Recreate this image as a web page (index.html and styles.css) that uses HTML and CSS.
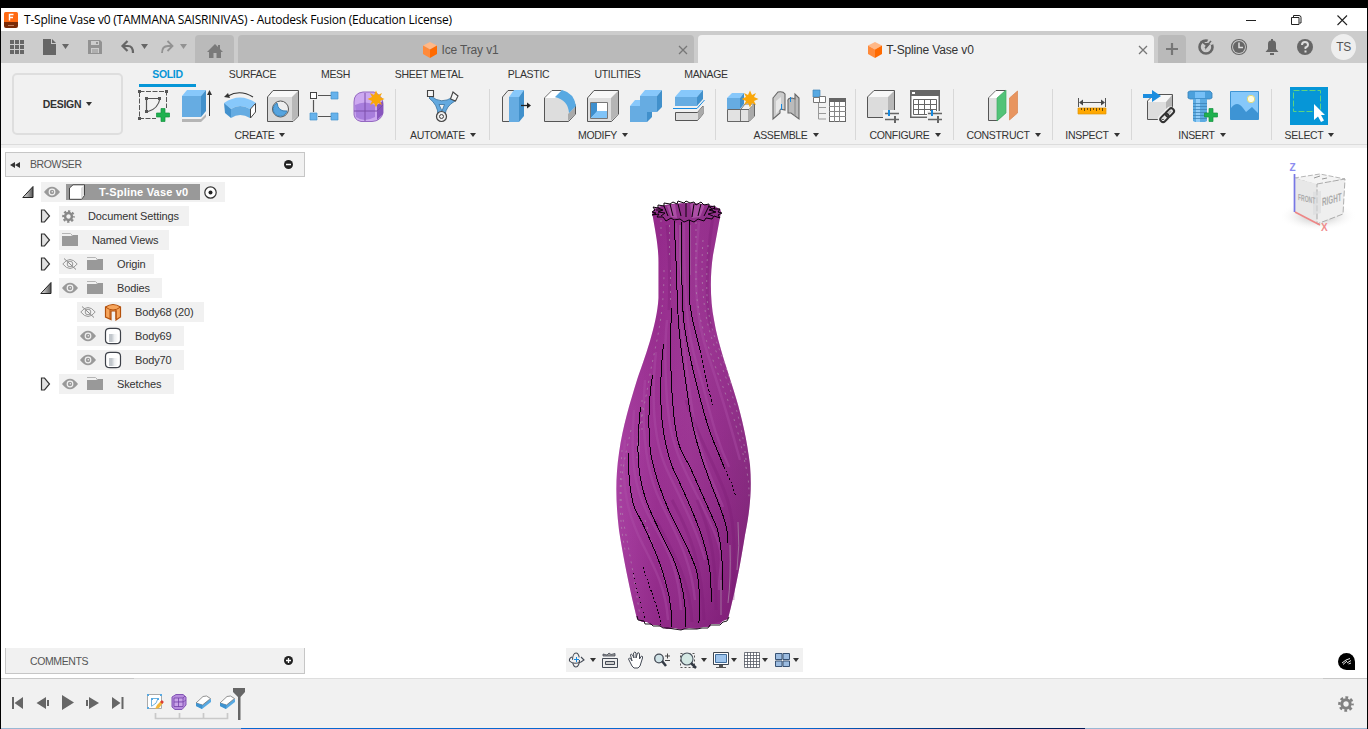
FILE: index.html
```html
<!DOCTYPE html>
<html lang="en">
<head>
<meta charset="utf-8">
<title>T-Spline Vase v0 - Autodesk Fusion</title>
<link rel="stylesheet" href="styles.css">
</head>
<body>
<svg class="defs" width="0" height="0">
  <defs>
    <linearGradient id="gVase" x1="0" x2="1" y1="0" y2="0"><stop offset="0" stop-color="#a53b9f"/><stop offset=".3" stop-color="#95298c"/><stop offset=".55" stop-color="#98308f"/><stop offset=".8" stop-color="#8f2987"/><stop offset="1" stop-color="#852a7e"/></linearGradient>
    <linearGradient id="gShade" x1=".3" x2=".8" y1="0" y2="1"><stop offset="0" stop-color="#8a2a82" stop-opacity=".2"/><stop offset=".4" stop-color="#b858b0" stop-opacity=".2"/><stop offset="1" stop-color="#6d1266" stop-opacity=".4"/></linearGradient>
    <linearGradient id="gCyl"><stop offset="0" stop-color="#c2c7cc"/><stop offset=".3" stop-color="#c2c7cc"/><stop offset=".6" stop-color="#eceef0"/><stop offset="1" stop-color="#fff"/></linearGradient>
    <linearGradient id="gTri"><stop offset="0" stop-color="#eee"/><stop offset="1" stop-color="#555"/></linearGradient>
    <radialGradient id="gShadow"><stop offset="0" stop-color="#aaa"/><stop offset="1" stop-color="#fff" stop-opacity="0"/></radialGradient>
  </defs>
  <symbol id="eye" viewBox="0 0 16 12"><path d="M0 6Q8-4.500 16 6Q8 16.500 0 6Z" fill="#999"/><circle cx="8" cy="6" r="3.400" fill="#f1f1f1"/><circle cx="8" cy="6" r="2.200" fill="#999"/><circle cx="8.300" cy="5.700" r=".8" fill="#eee"/></symbol>
  <symbol id="eyeoff" viewBox="0 0 16 12"><path d="M.8 6Q8-3 15.200 6Q8 15 .8 6Z" fill="none" stroke="#999"/><circle cx="8" cy="6" r="2.800" fill="none" stroke="#999"/><path d="M2 .5L14 11.500" stroke="#888"/></symbol>
  <symbol id="folder" viewBox="0 0 16 14"><path d="M0 .5H8.500L10 2" fill="none" stroke="#b5b5b5"/><path d="M0 3H9L11 2H16V13H0Z" fill="#999"/></symbol>
  <symbol id="closed" viewBox="0 0 12 16"><path d="M1.500 2H4.500L9.500 8L4.500 14H1.500Z" fill="#e2e2e2" stroke="#333" stroke-width="1.200"/></symbol>
  <symbol id="open" viewBox="0 0 12 16"><path d="M11 2.500V13.500H.8Z" fill="url(#gTri)" stroke="#222"/></symbol>
  <symbol id="cyl" viewBox="0 0 18 18"><path d="M1.500 5Q1.500 1.300 6 1.300H12Q16.500 1.300 16.500 5V13Q16.500 16.700 12 16.700H6Q1.500 16.700 1.500 13Z" fill="#fff" stroke="#3d4149" stroke-width="1.200"/><rect x="5" y="7" width="9" height="8" fill="url(#gCyl)"/></symbol>
  <symbol id="gear" viewBox="0 0 16 16"><circle cx="8" cy="8" r="4.200" fill="none" stroke="currentColor" stroke-width="3"/><circle cx="8" cy="8" r="6.500" fill="none" stroke="currentColor" stroke-width="2.600" stroke-dasharray="2.800 2.305" stroke-dashoffset="1.400"/></symbol>
  <symbol id="cube" viewBox="0 0 16 16"><path d="M8 0L15 3.500L8 7.500L1 3.500Z" fill="#ffb887"/><path d="M1 3.500L8 7.500V16L1 12Z" fill="#ff8a3a"/><path d="M15 3.500L8 7.500V16L15 12Z" fill="#ff6a00"/></symbol>
  <symbol id="sun" viewBox="0 0 18 18"><path d="M9 .5L11 5L15 3L13 7L17.500 9L13 11L15 15L11 13L9 17.500L7 13L3 15L5 11L.5 9L5 7L3 3L7 5Z" fill="#f9a70a"/></symbol>
  <symbol id="plus" viewBox="0 0 14 14"><path d="M5 .5H9V5H13.500V9H9V13.500H5V9H.5V5H5Z" fill="#1fb14f" stroke="#169441" stroke-width=".7"/></symbol>
  <symbol id="fillet" viewBox="0 0 16 16"><path d="M1 9V12L7 15L16 8V5Z" fill="#58a9e2"/><path d="M1 9L8 2.500L11.500 2L15.500 4.500L7.500 11Z" fill="#fff" stroke="#777" stroke-width=".8"/><path d="M1 9L7.500 11L7 15L1 12Z" fill="#3e93d0"/></symbol>
</svg>

<div class="window">
  <header class="titlebar">
    <svg class="app-logo" width="14" height="16" viewBox="0 0 14 16"><rect width="14" height="13" rx="1.500" fill="#ff6a13"/><path d="M0 10H14V14Q14 16 12 16H2Q0 16 0 14Z" fill="#7a2b08"/><path d="M5.500 8.500V2.500H9.500M5.500 5.500H9" fill="none" stroke="#fff" stroke-width="1.400"/><path d="M4 13.500H10" stroke="#c07a58"/></svg>
    <span class="title">T-Spline Vase v0 (TAMMANA SAISRINIVAS) - Autodesk Fusion (Education License)</span>
    <svg class="win-buttons" width="102" height="12" viewBox="1246 12 102 12"><path d="M1246 18.500H1256M1337.500 13.500L1347 23M1347 13.500L1337.500 23" fill="none" stroke="#222" stroke-width="1.100"/><path d="M1291.500 15.500H1299V22.500H1291.500ZM1293.500 15V13.500H1299Q1301 13.500 1301 15.500V21H1299.500" fill="none" stroke="#222"/></svg>
  </header>

  <nav class="tabbar">
    <svg class="quick" width="194" height="32" viewBox="1 31 194 32">
      <path d="M10 40h4v4h-4zM15 40h4v4h-4zM20 40h4v4h-4zM10 45h4v4h-4zM15 45h4v4h-4zM20 45h4v4h-4zM10 50h4v4h-4zM15 50h4v4h-4zM20 50h4v4h-4z" fill="#666"/>
      <path d="M43 39H51V44H56V55H43Z M52 39L56 43H52Z" fill="#666"/>
      <path d="M62 44H69L65.500 49ZM141 44H148L144.500 49Z" fill="#666"/><path d="M180 44H187L183.500 49Z" fill="#929292"/>
      <path d="M88 40H100L102 42V54H88Z" fill="#929292"/><path d="M91 41H99V45H91ZM91 48H99V53H91Z" fill="#ccc"/><path d="M92 50H98M92 52H98" stroke="#929292"/><path d="M96 42H98V44H96Z" fill="#929292"/>
      <path d="M127.500 41L122.500 46L127.500 51M122.500 46H128Q133 46 133 53" fill="none" stroke="#666" stroke-width="2.200"/>
      <path d="M167.500 41L172.500 46L167.500 51M172.500 46H168Q162 46 162 53" fill="none" stroke="#929292" stroke-width="1.800"/>
    </svg>
    <div class="tab home"><svg width="16" height="14" viewBox="0 0 16 14"><path d="M8 0L11 3V1H13V5L16 8H14V14H9.500V9H6.500V14H2V8H0Z" fill="#7a7a7a"/></svg></div>
    <div class="tab doc"><svg class="doc-cube" width="16" height="16"><use href="#cube"/></svg><span class="doc-name">Ice Tray v1</span><svg class="close" width="10" height="10" viewBox="0 0 10 10"><path d="M1 1L9 9M9 1L1 9" stroke="#777" stroke-width="1.300"/></svg></div>
    <div class="tab doc active"><svg class="doc-cube" width="16" height="16"><use href="#cube"/></svg><span class="doc-name">T-Spline Vase v0</span><svg class="close" width="10" height="10" viewBox="0 0 10 10"><path d="M1 1L9 9M9 1L1 9" stroke="#777" stroke-width="1.300"/></svg></div>
    <div class="tab add"><svg width="14" height="14" viewBox="0 0 14 14"><path d="M7 1V13M1 7H13" stroke="#777" stroke-width="2.200"/></svg></div>
    <svg class="status" width="125" height="32" viewBox="1190 31 125 32">
      <circle cx="1206" cy="47" r="6.500" fill="none" stroke="#666" stroke-width="2.600"/><path d="M1200 41L1208 40L1204 43L1211 43L1205 50L1206 46Z" fill="#666"/><path d="M1209 38L1214 44L1211 45L1207 42Z" fill="#ccc"/><path d="M1205 48L1211 41" stroke="#666" stroke-width="1.500"/>
      <circle cx="1239" cy="47" r="7.500" fill="none" stroke="#666" stroke-width="1.200"/><circle cx="1239" cy="47" r="6" fill="#666"/><path d="M1239 42.500V47.500H1243" fill="none" stroke="#ddd" stroke-width="1.500"/>
      <path d="M1265.500 52H1278.500L1276 49V44Q1276 40.500 1273 40.500V39H1271V40.500Q1268 40.500 1268 44V49ZM1270 53H1274V55H1270Z" fill="#666"/>
      <circle cx="1305" cy="47" r="8" fill="#666"/><path d="M1302 45Q1302 42 1305 42T1308 45Q1308 46.500 1305.500 47.500V49M1305.500 50.500V52.500" fill="none" stroke="#ddd" stroke-width="2"/>
    </svg>
    <div class="avatar">TS</div>
  </nav>

  <section class="ribbon">
    <div class="design">DESIGN<i class="caret"></i></div>
    <div class="ribbon-main">
      <div class="modes"><span class="mode m57 on">SOLID</span><span class="mode m113">SURFACE</span><span class="mode m53">MESH</span><span class="mode m134">SHEET METAL</span><span class="mode m65">PLASTIC</span><span class="mode m113">UTILITIES</span><span class="mode m64">MANAGE</span></div>
      <div class="groups">
        <div class="group create">
          <div class="tools">
            <svg viewBox="132 86 43 40"><path d="M139.500 92V118.500H156M139.500 91.500H166.500V108" fill="none" stroke="#555" stroke-dasharray="5 1.500"/><path d="M146.500 111V98.500H160Q158 109 148 111.500" fill="none" stroke="#555" stroke-width="1.200"/><path d="M138 90h3v3h-3zM165 90h3v3h-3zM138 117h3v3h-3zM145 97h3v3h-3zM158 97h3v3h-3zM145 110h3v3h-3z" fill="#555"/><svg x="156" y="108" width="14" height="14"><use href="#plus"/></svg></svg>
            <svg viewBox="175 86 43 40"><path d="M182 119L201 119L206 114V117L201 122H182Z" fill="#b5b5b5"/><path d="M182 96L187 90H206L201 96Z" fill="#87c8fb"/><path d="M182 96H201V117H182Z" fill="#66ace2"/><path d="M201 96L206 90V111L201 117Z" fill="#4190cb"/><path d="M209.500 116V94" stroke="#333"/><path d="M207 95L209.500 90L212 95Z" fill="#333"/></svg>
            <svg viewBox="218 86 43 40"><path d="M228 96Q240 89 253 97" fill="none" stroke="#333" stroke-width="1.200"/><path d="M224 97L228 93L230 98Z" fill="#333"/><path d="M224 103Q240 92 256 103L250 109Q240 103 231 109Z" fill="#87c8fb"/><path d="M224 103L231 109V118L225 113Z" fill="#4391cd"/><path d="M231 109Q240 103 250 109V118Q240 112 231 118Z" fill="#66ace2"/><path d="M250.500 109L255.500 103.500V112L250.500 118Z" fill="#fff" stroke="#444"/></svg>
            <svg viewBox="261 86 43 40"><path d="M267.500 97L273 90.500H298.500V116L293 121.500H267.500Z" fill="#f8f8f8" stroke="#555"/><path d="M268 97H292V121H268Z" fill="#d9d9d9"/><path d="M292 97L298 91V116L292 121Z" fill="#b8b8b8"/><circle cx="280.500" cy="109" r="8" fill="#eee" stroke="#555"/><path d="M277 103A7 7 0 1 0 287 111Q278 112 277 103Z" fill="#55a4df" stroke="#3880b5"/></svg>
            <svg viewBox="304 86 43 40"><path d="M318 95.500H331M313.500 100V112M318 116.500H331" stroke="#555" stroke-width="1.200"/><rect x="310.500" y="92.500" width="6" height="6" fill="#fff" stroke="#444"/><path d="M331 92h7v7h-7zM310 113h7v7h-7zM331 113h7v7h-7z" fill="#66b2ec" stroke="#4592cb" stroke-width=".7"/></svg>
            <svg viewBox="347 86 43 40"><path d="M354 102Q354 93 363 92H374Q383 96 383 104V113Q381 121 372 121.500H361Q353 120 354 111Z" fill="#cda9f0" stroke="#9468c1"/><path d="M355 105Q365 100 375 105V117Q364 123 356 117Z" fill="#a87edd"/><path d="M377 105L383 101V114L377 120Z" fill="#8755bd"/><path d="M365 93V121M354 111H377L383 105" stroke="#7c4eaa" fill="none"/><use href="#sun" x="367" y="90" width="18" height="18"/></svg>
          </div>
          <div class="label">CREATE<i class="caret"></i></div>
        </div>
        <div class="group automate">
          <div class="tools"><svg viewBox="420 86 43 40"><path d="M431 96Q441 105 453 97L455 101Q446 106 445 115H438Q438 105 429 98Z" fill="#63a9df" stroke="#356e9c" stroke-width=".8"/><path d="M439 104.500L444.500 104.500L442 111Z" fill="#f1f1f1" stroke="#356e9c" stroke-width=".8"/><circle cx="441.500" cy="116.500" r="5" fill="#eee" stroke="#444" stroke-width="1.200"/><circle cx="441.500" cy="116.500" r="2" fill="#eee" stroke="#444"/><path d="M427.500 90.500H433.500V96.500H427.500Z M453 92L458 96L455.500 101L450.500 99Z" fill="#f5f5f5" stroke="#444" stroke-width="1.100"/></svg></div>
          <div class="label">AUTOMATE<i class="caret"></i></div>
        </div>
        <div class="group modify">
          <div class="tools">
            <svg viewBox="495 86 43 40"><path d="M502.500 97L508 90.500H515V121.500H502.500Z" fill="#ececec" stroke="#555"/><path d="M509 97L514 90H524L519 97Z" fill="#87c8fb"/><path d="M509 97H519V122H509Z" fill="#66ace2"/><path d="M519 97L524 90V116L519 122Z" fill="#4190cb"/><path d="M521 105.500H528" stroke="#222" stroke-width="1.300"/><path d="M527 102.500L531 105.500L527 108.500Z" fill="#222"/></svg>
            <svg viewBox="538 86 43 40"><path d="M544.500 98L552 90.500H560Q572 93 575.500 106V114L568.500 121.500H544.500Z" fill="#ddd" stroke="#555"/><path d="M545 98L552 91H562L555 98Z" fill="#fff"/><path d="M568 114L575 107V114L568 121Z" fill="#aaa"/><path d="M555 97L562 90Q574 93 576 106L569 113Q568 100 555 97Z" fill="#58a9e2"/></svg>
            <svg viewBox="581 86 43 40"><path d="M587.500 98L594 90.500H618.500V114L611.500 121.500H587.500Z" fill="#f7f7f7" stroke="#555"/><path d="M588 98H611V121H588Z" fill="#dedede"/><path d="M611 98L618 91V114L611 121Z" fill="#b5b5b5"/><path d="M590.500 102.500H607.500V118.500H590.500Z" fill="#fff" stroke="#777"/><path d="M591 103L597 103V112L591 118Z" fill="#3d8fce"/><path d="M591 118L597 111H607V118Z" fill="#80c4f8"/></svg>
            <svg viewBox="624 86 43 40"><path d="M640 96L645 90H662L657 96ZM630 106L635 100H640V106Z" fill="#87c8fb"/><path d="M640 96H657V112H647V122H630V106H640Z" fill="#66ace2"/><path d="M657 96L662 90V107L657 112H652V117L647 122V112H657Z" fill="#4190cb"/></svg>
            <svg viewBox="667 86 43 40"><path d="M675 97L681 90H703L697 97Z" fill="#87c8fb"/><path d="M675 97H697V106H675Z" fill="#66ace2"/><path d="M697 97L703 90V99L697 106Z" fill="#4190cb"/><path d="M673 108.500H697L704.500 100" fill="none" stroke="#1689df"/><path d="M675.500 112.500H697.500L703 106V114L697.500 120.500H675.500Z" fill="#ddd" stroke="#555"/><path d="M698 112L703 106V114L698 120Z" fill="#aaa"/></svg>
          </div>
          <div class="label">MODIFY<i class="caret"></i></div>
        </div>
        <div class="group assemble">
          <div class="tools">
            <svg viewBox="722 86 43 40"><path d="M727.500 109.500H749L754.500 104V116L749 121.500H727.500Z" fill="#e2e2e2" stroke="#666"/><path d="M740.500 110V121M749 110V121M741 109L745 104H754" stroke="#777" fill="none"/><path d="M749.500 110L754 105V116L749.500 121Z" fill="#aaa"/><path d="M727 98L732 93H744L740 98Z" fill="#87c8fb"/><path d="M727 98H740V109H727Z" fill="#66ace2"/><path d="M740 98L744 93V104L740 109Z" fill="#4190cb"/><use href="#sun" x="741" y="90" width="18" height="18"/></svg>
            <svg viewBox="765 86 43 40"><path d="M773 98L778 92Q783 91 785 94V110L780 109V113L773 119Z" fill="#ccc" stroke="#666" stroke-width="1.100"/><path d="M776 101L781 97V108L776 114Z" fill="#e8e8e8"/><path d="M788 102Q787 98 792 98L795 99V94L799 98V119L791 113H788Z" fill="#bbb" stroke="#666" stroke-width="1.100"/><path d="M795 97V116" stroke="#888"/><path d="M781.500 104V110M790.500 97V102" stroke="#1689df"/></svg>
            <svg viewBox="808 86 43 40"><path d="M813 90H820V97H813Z" fill="#58a9e2" stroke="#4085b8" stroke-width=".7"/><path d="M813.500 97.500H819.500V102.500H813.500ZM819.500 96.500H825.500V102.500H819.500Z" fill="#fff" stroke="#777"/><path d="M818.500 103V119H826M818.500 107.500H826M818.500 113.500H826" fill="none" stroke="#999"/><path d="M829 98H846V122H829Z" fill="#666"/><path d="M830 102H845V121H830Z" fill="#fff"/><path d="M829 106.500H846M829 111.500H846M829 116.500H846M834.500 102V122M839.500 102V122" stroke="#888"/></svg>
          </div>
          <div class="label">ASSEMBLE<i class="caret"></i></div>
        </div>
        <div class="group configure">
          <div class="tools">
            <svg viewBox="861 86 43 40"><path d="M867.500 97L874 90.500H894.500V111L888 117.500H867.500Z" fill="#f8f8f8" stroke="#555"/><path d="M868 97H888V117H868Z" fill="#dcdcdc"/><path d="M888 97L894 91V111L888 117Z" fill="#b8b8b8"/><path d="M883 110H901V124H883Z" fill="#f1f1f1"/><path d="M885 113.500H899M885 119.500H899" stroke="#666" stroke-width="1.500"/><path d="M888 110h2v6h-2z" fill="#1689df"/><path d="M894 116h2v7h-2z" fill="#666"/></svg>
            <svg viewBox="904 86 43 40"><path d="M910 90H940V118H910Z" fill="#666"/><path d="M911.500 96H938.500V116.500H911.500Z" fill="#fff"/><path d="M913.500 99.500H936.500V114.500H913.500ZM913 104.500H937M913 109.500H937M918.500 99V115M924.500 99V115M930.500 99V115" fill="none" stroke="#666"/><path d="M912 92h3v2h-3z" fill="#fff"/><path d="M927 111H943V124H927Z" fill="#f1f1f1"/><path d="M928 113.500H942M928 119.500H942" stroke="#666" stroke-width="1.500"/><path d="M931 110h2v6h-2z" fill="#1689df"/><path d="M937 116h2v7h-2z" fill="#666"/></svg>
          </div>
          <div class="label">CONFIGURE<i class="caret"></i></div>
        </div>
        <div class="group construct">
          <div class="tools"><svg viewBox="982 86 43 40"><path d="M988.500 98L996 90.500H1005V113L997 120.500H988.500Z" fill="#e0e0e0" stroke="#555"/><path d="M989 98L996 91H1005L997 98Z" fill="#fff"/><path d="M997 98L1006 90V113L997 121Z" fill="#52c378" stroke="#42aa65" stroke-width=".7"/><path d="M1009.500 98L1017.500 91V113L1009.500 120Z" fill="#e8955f" stroke="#d98450" stroke-width=".7"/></svg></div>
          <div class="label">CONSTRUCT<i class="caret"></i></div>
        </div>
        <div class="group inspect">
          <div class="tools"><svg viewBox="1071 86 43 40"><path d="M1078.500 98V107M1105.500 98V107M1081 102.500H1103" stroke="#555" fill="none"/><path d="M1079 102.500L1083 99.500V105.500ZM1105 102.500L1101 99.500V105.500Z" fill="#444"/><path d="M1078 108H1106V114H1078Z" fill="#ffa800" stroke="#e09608" stroke-width=".7"/><path d="M1081.500 108V110M1084.500 108V111M1087.500 108V110M1090.500 108V111M1093.500 108V110M1096.500 108V111M1099.500 108V110M1102.500 108V111" stroke="#6d4b0a"/></svg></div>
          <div class="label">INSPECT<i class="caret"></i></div>
        </div>
        <div class="group insert">
          <div class="tools">
            <svg viewBox="1137 86 43 40"><path d="M1147.500 101L1154 94.500H1172.500V113L1166 119.500H1147.500Z" fill="#f7f7f7" stroke="#555"/><path d="M1148 102H1166V119H1148Z" fill="#ddd"/><path d="M1166 102L1172 95V113L1166 119Z" fill="#b5b5b5"/><path d="M1143 94H1152V90L1161 96L1152 102V98H1143Z" fill="#1b8ddf"/><g transform="rotate(-45 1167 115)" fill="none" stroke="#f1f1f1" stroke-width="4"><rect x="1158" y="112" width="9" height="6" rx="3"/><rect x="1166" y="112" width="9" height="6" rx="3"/></g><g transform="rotate(-45 1167 115)" fill="none" stroke="#333" stroke-width="2"><rect x="1158.500" y="112.500" width="9.500" height="5.500" rx="2.700"/><rect x="1166" y="112.500" width="9.500" height="5.500" rx="2.700"/></g></svg>
            <svg viewBox="1180 86 43 40"><path d="M1188 92L1190 91H1210L1212 93V98L1210 99H1190L1188 98Z" fill="#4ba0dc" stroke="#3581b8" stroke-width=".8"/><path d="M1195 92H1205V98H1195Z" fill="#76c0f7"/><path d="M1193 99H1207V121L1205 122H1195L1193 121Z" fill="#5cabe2"/><path d="M1196 99H1200V122H1196Z" fill="#90ccf8"/><path d="M1193 103.500H1207M1193 106.500H1207M1193 109.500H1207M1193 112.500H1207M1193 115.500H1207M1193 118.500H1207" stroke="#3d83b6" stroke-width=".8"/><svg x="1204" y="108" width="14" height="14"><use href="#plus"/></svg></svg>
            <svg viewBox="1223 86 43 40"><path d="M1230.500 91.500H1258.500V119.500H1230.500Z" fill="#86c8fa" stroke="#3e94d4"/><path d="M1231 108Q1237 100 1243 108L1246 112L1252 107L1258 113V119H1231Z" fill="#3e94d4"/><circle cx="1251" cy="99" r="3.700" fill="#fffce0" stroke="#e2d978"/></svg>
          </div>
          <div class="label">INSERT<i class="caret"></i></div>
        </div>
        <div class="group select">
          <div class="tools"><svg viewBox="1287 86 43 40"><path d="M1290 87H1328V125H1290Z" fill="#0696d7"/><path d="M1293.500 90.500H1320.500V111.500H1293.500Z" fill="none" stroke="#5ed37f" stroke-dasharray="6 2"/><path d="M1314 104V120L1318 116.500L1321 122L1324 120.500L1321 115H1325Z" fill="#fff"/></svg></div>
          <div class="label">SELECT<i class="caret"></i></div>
        </div>
      </div>
    </div>
  </section>

  <main class="canvas">
    <aside class="left">
      <div class="browser">
        <div class="panel"><svg width="10" height="6" viewBox="0 0 10 6"><path d="M5 0V6L0 3ZM10 0V6L5 3Z" fill="#333"/></svg><span class="panel-name">BROWSER</span><svg width="9" height="9" viewBox="0 0 9 9"><circle cx="4.500" cy="4.500" r="4.500" fill="#222"/><path d="M2 4.500H7" stroke="#fff" stroke-width="1.500"/></svg></div>
        <div class="tree">
          <div class="row l0"><svg class="arrow" width="12" height="16"><use href="#open"/></svg><div class="item w184"><svg width="16" height="12"><use href="#eye"/></svg><div class="root"><svg width="18" height="16" viewBox="0 0 18 16"><path d="M1.500 4L5 .8H16.500V11.500L13.500 15.300H1.500Z" fill="#fff" stroke="#444"/><path d="M13 4L16 1.500V11L13 15Z" fill="#ddd"/></svg><b>T-Spline Vase v0</b></div><svg width="13" height="13" viewBox="0 0 13 13"><circle cx="6.500" cy="6.500" r="5.700" fill="#fff" stroke="#333" stroke-width="1.200"/><circle cx="6.500" cy="6.500" r="2" fill="#222"/></svg></div></div>
          <div class="row l1"><svg class="arrow" width="12" height="16"><use href="#closed"/></svg><div class="item w130"><svg class="gear-small" width="13" height="13"><use href="#gear"/></svg><span class="t13">Document Settings</span></div></div>
          <div class="row l1"><svg class="arrow" width="12" height="16"><use href="#closed"/></svg><div class="item w110"><svg width="16" height="14"><use href="#folder"/></svg><span class="t14">Named Views</span></div></div>
          <div class="row l1"><svg class="arrow" width="12" height="16"><use href="#closed"/></svg><div class="item w95"><svg width="16" height="12"><use href="#eyeoff"/></svg><svg class="second" width="16" height="14"><use href="#folder"/></svg><span class="t14">Origin</span></div></div>
          <div class="row l1"><svg class="arrow" width="12" height="16"><use href="#open"/></svg><div class="item w103"><svg width="16" height="12"><use href="#eye"/></svg><svg class="second" width="16" height="14"><use href="#folder"/></svg><span class="t14">Bodies</span></div></div>
          <div class="row l2"><div class="item w127"><svg width="16" height="12"><use href="#eyeoff"/></svg><svg class="second body" width="18" height="18" viewBox="0 0 18 18"><path d="M1.500 4Q9-1 16.500 4V14L12 17V8H7V16.500L1.500 14Z" fill="#f6a55c" stroke="#b4510c" stroke-width="1.200"/><path d="M1.500 4Q9 10 16.500 4M6 7V16M12 7V16" fill="none" stroke="#b4510c"/></svg><span class="t13">Body68 (20)</span></div></div>
          <div class="row l2"><div class="item w107"><svg width="16" height="12"><use href="#eye"/></svg><svg class="second body" width="18" height="18"><use href="#cyl"/></svg><span class="t13">Body69</span></div></div>
          <div class="row l2"><div class="item w107"><svg width="16" height="12"><use href="#eye"/></svg><svg class="second body" width="18" height="18"><use href="#cyl"/></svg><span class="t13">Body70</span></div></div>
          <div class="row l1"><svg class="arrow" width="12" height="16"><use href="#closed"/></svg><div class="item w115"><svg width="16" height="12"><use href="#eye"/></svg><svg class="second" width="16" height="14"><use href="#folder"/></svg><span class="t14">Sketches</span></div></div>
        </div>
      </div>
      <div class="panel comments"><span class="panel-name">COMMENTS</span><svg width="9" height="9" viewBox="0 0 9 9"><circle cx="4.500" cy="4.500" r="4.500" fill="#222"/><path d="M2 4.500H7M4.500 2V7" stroke="#fff" stroke-width="1.300"/></svg></div>
    </aside>

    <div class="center">
      <svg class="vase" width="144" height="440" viewBox="612 195 144 440">
        <path d="M652 212C655 230 658.500 245 658.500 262V298C657 325 644 360 637 380C630 403 623 425 619 453C615 480 616 505 619 530C622 550 627 575 632 598L637 619L642 622L647 622L651 625L658 625L662 627L667 629L675 628L681 630L689 628L697 629L703 627L710 627L711 624L720 624L723 621L728 619C736 588 741 560 745 535C750 510 752 490 750 465C747 440 742 418 736 398C729 374 718 345 714 320C710 300 710 275 713 255L721 212Z" fill="url(#gVase)"/>
        <path d="M652 212C655 230 658.500 245 658.500 262V298C657 325 644 360 637 380C630 403 623 425 619 453C615 480 616 505 619 530C622 550 627 575 632 598L637 619L667 629L703 627L728 619C736 588 741 560 745 535C750 510 752 490 750 465C747 440 742 418 736 398C729 374 718 345 714 320C710 300 710 275 713 255L721 212Z" fill="url(#gShade)"/>
        <g fill="none" stroke="#ad51a7" stroke-opacity=".4" stroke-width="2.500">
          <path d="M676 223C678 257 678 300 681 323S688 385 694 420S712 480 723 507"/><path d="M684 223C684 290 686 330 697 365S712 430 729 467"/>
          <path d="M667 320C664 350 665 400 671 430S690 480 709 520S719 560 719 590"/><path d="M656 352C651 400 653 440 667 470S697 530 705 560"/>
          <path d="M645 380C641 430 645 470 661 503S691 560 695 600"/><path d="M634 410C630 460 634 490 651 520S679 570 681 610"/><path d="M625 440C620 490 630 520 643 545S666 590 668 620"/><path d="M699 222C693 280 696 320 708 355S729 420 740 460"/>
        </g>
        <g fill="none" stroke="#7c1b73" stroke-opacity=".3" stroke-width="3">
          <path d="M667 225C670 250 670 290 669 310"/><path d="M686 400C695 430 712 460 724 490S735 550 733 600"/><path d="M697 500C708 525 716 550 716 610"/><path d="M672 500C688 530 702 560 704 620"/><path d="M656 520C672 550 690 580 692 622"/><path d="M713 216C706 260 705 310 712 330"/>
        </g>
        <g fill="none" stroke="#b294b0" stroke-opacity=".6" stroke-dasharray="2 5">
          <path d="M661 220V238M669.500 225V260M670.500 270V304M664 270C664 320 655 345 649 380S637 430 637 458"/><path d="M696 222V285C697 315 706 340 713 360S733 410 741 445S749 480 749 500"/><path d="M703 240C701 270 702 300 708 325S726 375 733 398S744 440 746 460"/><path d="M708 245C706 280 706 300 710 320S725 360 731 385"/>
          <path d="M631 430C622 470 617 490 625 530S636 590 640 616"/><path d="M622 450C620 485 618 515 625 550"/><path d="M642 400V430"/><path d="M645 520C655 555 665 575 670 602"/>
        </g>
        <path d="M680 225V260L681 285M690 225V275M738 522Q740 545 737 570M730 545Q731 580 728 603M721 580V615M639 430V455" fill="none" stroke="#ab85a8" stroke-opacity=".75"/>
        <g fill="none" stroke="#080008" shape-rendering="crispEdges">
          <path d="M674 221C675 240 676.500 265 677 290S680 345 684 370S688 405 693 427S703 463 711 484S728 523 728 543"/>
          <path d="M681 221C682 250 681 300 684 323S694 375 700 398S709 430 713 440S719 454 724 467"/><path d="M724 467L731 482L736 497" stroke-dasharray="2 2"/>
          <path d="M689 220V290C689 310 695 330 700 350"/><path d="M700 350C704 371 709 393 713 405" stroke-dasharray="3 2"/>
          <path d="M671.500 308C670 345 670 380 674 417S685 456 690 467S709 510 715 523S724 570 722 590"/>
          <path d="M663.500 344C660 375 660 398 662 420S670 463 675 473S697 520 703 540S712 575 711 603"/>
          <path d="M652.500 375C648 405 648 425 650 447S664 500 670 513S693 555 697 573S699 605 699 623"/>
          <path d="M640.500 407C637 440 636 470 645 497S668 545 675 563S686 605 686 627"/>
          <path d="M628.500 453C628 482 632 505 637 513S658 556 663 573S672 605 672 627"/>
          <path d="M643 567C650 590 657 603 661 625" stroke-dasharray="2 2"/><path d="M633 573L645 620" stroke-dasharray="1 4"/>
        </g>
        <path d="M637 616L638 620L644 621L645 624H651L653 626H660L663 628H668L674 629L681 630L684 629H697L702 628L708 628L710 625H720L723 622L727 621L729 617" fill="none" stroke="#080008" stroke-width=".9"/>
        <ellipse cx="687" cy="211.500" rx="34" ry="8.500" fill="#90308a"/>
        <path d="M667 206L671 217L677 218L675 204ZM690 203L692 218L700 217L705 205Z" fill="#ac4fa6"/>
        <g fill="none" stroke="#0a0008">
          <path d="M652 212L655 210L653 207L658 208L658 205L664 206L664 203L670 204L673 202L677 204L678 201L684 203L686 201L690 203L694 202L696 205L701 202L704 205L709 204L709 207L715 206L714 209L720 209L718 212L722 213L718 215L720 218L714 216L712 219L706 218L704 221L698 219L694 222L689 220L684 222L680 219L674 220L671 218L666 221L663 217L657 217L659 214L652 215L656 213Z"/>
          <path d="M658 208L663 210L658 212L665 213L661 216M664 206L668 216M670 204L673 216M678 204L681 216M686 203V217M694 204L692 217M701 204L698 216M709 206L704 216M715 208L709 210L716 212L708 214L713 216M656 210H662M710 207L714 212"/>
        </g>
      </svg>
      <svg class="viewtools" width="237" height="24" viewBox="566 648 237 24">
        <path d="M566 648H803V672H566Z" fill="#f1f1f1"/>
        <path d="M590 658H596L593 662ZM701 658H707L704 662ZM731 658H737L734 662ZM762 658H768L765 662ZM793 658H799L796 662Z" fill="#333"/>
        <ellipse cx="576" cy="660" rx="3.500" ry="7" fill="none" stroke="#444a55" stroke-width="1.100" stroke-dasharray="14 3"/><path d="M572 657Q569 658 569.500 661Q573 665 581 662L584 660L581 657" fill="none" stroke="#444a55" stroke-width="1.100"/><path d="M576.500 657V662M574 659.500H579" stroke="#1689df"/>
        <path d="M602.500 658.500H617.500V667.500H602.500Z" fill="#eee" stroke="#444a55"/><path d="M605.500 661.500H614.500V664.500H605.500Z" fill="#ccc" stroke="#444a55"/><path d="M603 656V654L607 655L609 653L611 654.500L615 653.500V656Z" fill="#999" stroke="#444a55" stroke-width=".8"/>
        <path d="M632 666L628.500 659Q629 657 631 659L632 661L630.500 655Q631 653 632.500 655L634 658L633.500 653Q635 651 636 653V658L637.500 653Q639 652 639.500 654V659L641.500 656Q643 656 642.500 658L640 666L638 668H634Z" fill="#fff" stroke="#444a55"/>
        <circle cx="659" cy="658.500" r="4.300" fill="#cfe2e6" stroke="#444a55" stroke-width="1.300"/><path d="M662 661L666 666" stroke="#333a44" stroke-width="2.500"/><path d="M665 656H670M667.500 653.500V658.500M665 660.500H670" stroke="#444"/>
        <path d="M680.500 653.500H694.500V667.500H680.500Z" fill="none" stroke="#555" stroke-dasharray="2 2"/><circle cx="687" cy="659" r="6" fill="#d4e8e4" stroke="#4d5660" stroke-width="1.100"/><path d="M691 663L696 668" stroke="#333a44" stroke-width="2.500"/>
        <path d="M713.500 652.500H728.500V664.500H713.500Z" fill="#fff" stroke="#3f4650"/><path d="M715.500 654.500H726.500V662.500H715.500Z" fill="#9dc4ed" stroke="#406c9a"/><path d="M719 665H723V667H726V668H716V667H719Z" fill="#555"/>
        <path d="M744.500 652.500H759.500V667.500H744.500ZM747.500 652V668M750.500 652V668M753.500 652V668M756.500 652V668M744 655.500H760M744 658.500H760M744 661.500H760M744 664.500H760" fill="#fff" stroke="#555b65" stroke-width=".8"/>
        <path d="M775.500 653.500H782V659.500H775.500ZM783 653.500H789.500V659.500H783ZM775.500 661H782V666.500H775.500ZM783 661H789.500V666.500H783Z" fill="#9cbce0" stroke="#385273"/>
      </svg>
    </div>

    <aside class="right">
      <svg class="viewcube" width="98" height="84" viewBox="1270 156 98 84">
        <ellipse cx="1318" cy="216" rx="39" ry="15" fill="url(#gShadow)"/>
        <path d="M1294 178L1320 174L1345 179L1317 185Z" fill="#f4f4f4" stroke="#a5a5a5" stroke-width=".8" stroke-dasharray="5 2"/>
        <path d="M1294 178L1317 184V224L1295 213Z" fill="#e8e8e8"/><path d="M1317 184L1345 179L1343 214L1317 224Z" fill="#efefef" stroke="#9a9a9a" stroke-width=".8" stroke-dasharray="6 2"/>
        <path d="M1313 192L1321 191V213L1313 215Z" fill="#d8dadc" opacity=".6"/><path d="M1314 178L1320 176M1322 179L1327 178" stroke="#999"/>
        <path d="M1294.500 174V212" stroke="#7777e5" stroke-width="1.700"/><path d="M1295 212L1320 225" stroke="#ed8686" stroke-width="1.700"/>
        <text class="axis z" x="1289.500" y="171">Z</text><text class="axis x" x="1321" y="231">X</text>
        <text class="face" transform="matrix(.56 .13 0 1 1298 200)">FRONT</text><text class="face wide" transform="matrix(.63 -.17 0 1.150 1322 206)">RIGHT</text>
      </svg>
      <svg class="assist" width="17" height="17" viewBox="0 0 17 17"><path d="M8.500 0A8.500 8.500 0 0 1 17 8.500V17H8.500A8.500 8.500 0 0 1 8.500 0Z"/><path d="M4 10L8 7L12 5.500M5 11.500L9 8M9 10L13 7.500M10.500 11L13 10" fill="none" stroke="#e8e8e8"/></svg>
    </aside>
  </main>

  <footer class="timeline">
    <svg width="130" height="49" viewBox="1 679 130 49"><path d="M12 697H14V709H12ZM23 697V709L14.500 703ZM46 697V709L36.500 703ZM47 700H49V706H47ZM62 695L74 702.500L62 710ZM86 700H88V706H86ZM89 697L99 703L89 709ZM112 697V709L120.500 703ZM121.500 697H123.500V709H121.500Z" fill="#666"/></svg>
    <svg class="features" width="120" height="49" viewBox="131 679 120 49">
      <path d="M147.500 694.500H161.500V708.500H147.500Z" fill="#fff" stroke="#aaa"/><path d="M151.500 698.500V706.500M151.500 698.500H158Q157 704 152 706" fill="none" stroke="#4aa0d6" stroke-width=".8"/><path d="M147 694h2v2h-2zM160 694h2v2h-2zM147 707h2v2h-2zM151 698h2v2h-2zM157 698h2v2h-2z" fill="#58a9e2"/><path d="M155 709L157 705L161 701L163 703L159 708Z" fill="#f3b83c"/><path d="M161 701L163 703" stroke="#db3c35" stroke-width="2.500"/>
      <path d="M172 697L176 694.500H183L186 697V705L182 709.500H175L172 707Z" fill="#b78cdd" stroke="#8355b5"/><path d="M174 698H183V706.500H174ZM178.500 698V707M174 702H183L186 700M183 698L185 696" fill="#c9a4e8" stroke="#7543a8" stroke-width=".8"/>
      <use href="#fillet" x="195" y="694" width="16" height="16"/><use href="#fillet" x="219" y="694" width="16" height="16"/>
      <path d="M155.500 713V718.500H227.500V713M179.500 713V718M203.500 713V718" fill="none" stroke="#c9c9c9" stroke-width="1.700"/><path d="M233 688H245V692L240.500 697V720H238V697L233 692Z" fill="#666"/>
    </svg>
    <svg class="settings" width="16" height="16"><use href="#gear"/></svg>
  </footer>
  <div class="taskbar-edge"></div>
</div>
</body>
</html>
```
FILE: styles.css
```css
* { box-sizing: border-box; }
body { margin: 0; background: #000; font-family: "Liberation Sans", Arial, sans-serif; font-size: 11px; color: #333; overflow: hidden; }
svg { display: block; flex: none; }
.defs { position: absolute; }
.window { display: flex; flex-direction: column; width: 1368px; height: 729px; padding: 8px 1px 0; background: #000; white-space: nowrap; }

.titlebar { display: flex; align-items: center; height: 23px; background: #fff; padding: 0 19px 0 3px; }
.title { margin-left: 6px; font: 12px/22px "Open Sans", "Noto Sans", sans-serif; letter-spacing: -.225px; color: #000; }
.win-buttons { margin-left: auto; }

.tabbar { display: flex; height: 32px; background: #ccc; padding-right: 11px; }
.tab { display: flex; align-items: center; justify-content: center; height: 28px; margin: 4px 4px 0 0; background: #bababa; border-radius: 4px 4px 0 0; }
.home { width: 39px; margin-left: 0; padding-top: 4px; }
.doc { width: 456px; padding: 2px 6px 0 5px; font-size: 12px; letter-spacing: -.15px; color: #555; }
.doc .doc-cube { margin-left: auto; }
.doc-name { margin-left: 3px; }
.doc .close { margin-left: auto; }
.active { background: #f1f1f1; color: #333; }
.add { width: 28px; }
.avatar { width: 25px; height: 26px; margin: 3px 0 0 16px; border-radius: 50%; background: #eee; color: #555; font-size: 12px; letter-spacing: -.5px; line-height: 27px; text-align: center; }

.ribbon { display: flex; height: 85px; background: linear-gradient(#dcdcdc, #dcdcdc) 0 81px / 100% 1px no-repeat #f1f1f1; font-size: 10.5px; letter-spacing: -.32px; }
.caret { display: inline-block; margin: 0 0 2px 5px; border: 3px solid transparent; border-top: 4px solid #333; border-bottom: 0; }
.design { width: 111px; height: 62px; margin: 10px 0 0 11px; border: 2px solid #dedede; border-radius: 5px; font-weight: bold; line-height: 58px; text-align: center; flex: none; }
.ribbon-main { display: flex; flex-direction: column; width: 1223px; flex: none; margin-left: 1px; }
.modes { display: flex; height: 23px; padding-left: 15px; }
.mode { text-align: center; line-height: 22px; height: 23px; }
.m57 { width: 57px; } .m113 { width: 113px; } .m53 { width: 53px; } .m134 { width: 134px; } .m65 { width: 65px; } .m64 { width: 64px; }
.on { color: #0696d7; font-weight: bold; border-bottom: 3px solid #0696d7; height: 24px; }
.groups { display: flex; }
.group { flex: none; height: 59px; background: linear-gradient(#d8d8d8, #d8d8d8) 100% 3px / 1px 51px no-repeat; }
.tools { display: flex; height: 40px; }
.tools > svg { width: 43px; height: 40px; }
.label { line-height: 19px; text-align: center; }
.create { width: 272px; } .create .tools { padding-left: 8px; }
.automate { width: 94px; } .automate .tools { padding-left: 24px; }
.modify { width: 226px; } .modify .tools { padding-left: 5px; }
.assemble { width: 140px; } .assemble .tools { padding-left: 6px; }
.configure { width: 98px; } .configure .tools { padding-left: 5px; }
.construct { width: 99px; } .construct .tools { padding-left: 28px; }
.inspect { width: 79px; } .inspect .tools { padding-left: 18px; }
.insert { width: 140px; } .insert .tools { padding-left: 5px; }
.select { width: 75px; background: none; } .select .tools { padding-left: 15px; }

.canvas { display: grid; grid-template-columns: 304px 1fr 304px; height: 530px; background: #fff; }
.left { display: flex; flex-direction: column; justify-content: space-between; padding: 4px 0 4px 4px; }
.panel { display: flex; align-items: center; height: 25px; padding: 0 11px 0 4px; border: 1px solid #c6c6c6; background: #f1f1f1; color: #555; font-size: 10.5px; letter-spacing: -.38px; }
.panel-name { margin: 0 auto 0 10px; padding-bottom: 1px; }
.comments { height: 26px; border-top: 0; }
.comments .panel-name { margin-left: 20px; padding-bottom: 0; }
.tree { display: flex; flex-direction: column; gap: 4px; padding-top: 5px; }
.row { display: flex; align-items: center; height: 20px; letter-spacing: -.12px; }
.l0 { padding-left: 17px; } .l1 { padding-left: 35px; } .l2 { padding-left: 72px; }
.arrow { margin-right: 7px; }
.item { display: flex; align-items: center; height: 20px; background: #f1f1f1; padding-left: 3px; }
.w184 { width: 184px; } .w130 { width: 130px; } .w110 { width: 110px; } .w95 { width: 95px; } .w103 { width: 103px; } .w127 { width: 127px; } .w107 { width: 107px; } .w115 { width: 115px; }
.root { display: flex; align-items: center; width: 134px; height: 16px; margin: 0 4px 0 6px; padding-left: 2px; background: #999; color: #fff; }
.root b { margin-left: 13px; letter-spacing: .2px; }
.second { margin-left: 9px; }
.second.body { margin-left: 8px; }
.gear-small { color: #888; }
.t13 { margin-left: 13px; } .t14 { margin-left: 14px; }

.center { display: flex; flex-direction: column; align-items: center; padding: 47px 0 6px; justify-content: space-between; }
.right { display: flex; flex-direction: column; align-items: flex-end; justify-content: space-between; padding: 8px 0 8px; }
.viewcube { margin-right: -1px; }
.assist { margin-right: 12px; }
.axis { font: bold 10px "Liberation Sans", sans-serif; } .z { fill: #8c8cf0; } .x { fill: #f08c8c; }
.face { font: bold 9px "Liberation Sans", sans-serif; fill: #aaa; } .wide { font-size: 10px; }

.timeline { display: flex; align-items: center; height: 50px; padding-right: 13px; border-top: 1px solid; border-image: linear-gradient(90deg, #c8c8c8 134px, #dedede 134px 1321px, #c8c8c8 1321px) 1; background: #f1f1f1; }
.settings { margin-left: auto; color: #808080; }
.taskbar-edge { height: 1px; background: linear-gradient(90deg, #9ab8d4 240px, #0868d0 240px 800px, #001b58 1000px 1084px, #9ab8d4 1084px); }
```
